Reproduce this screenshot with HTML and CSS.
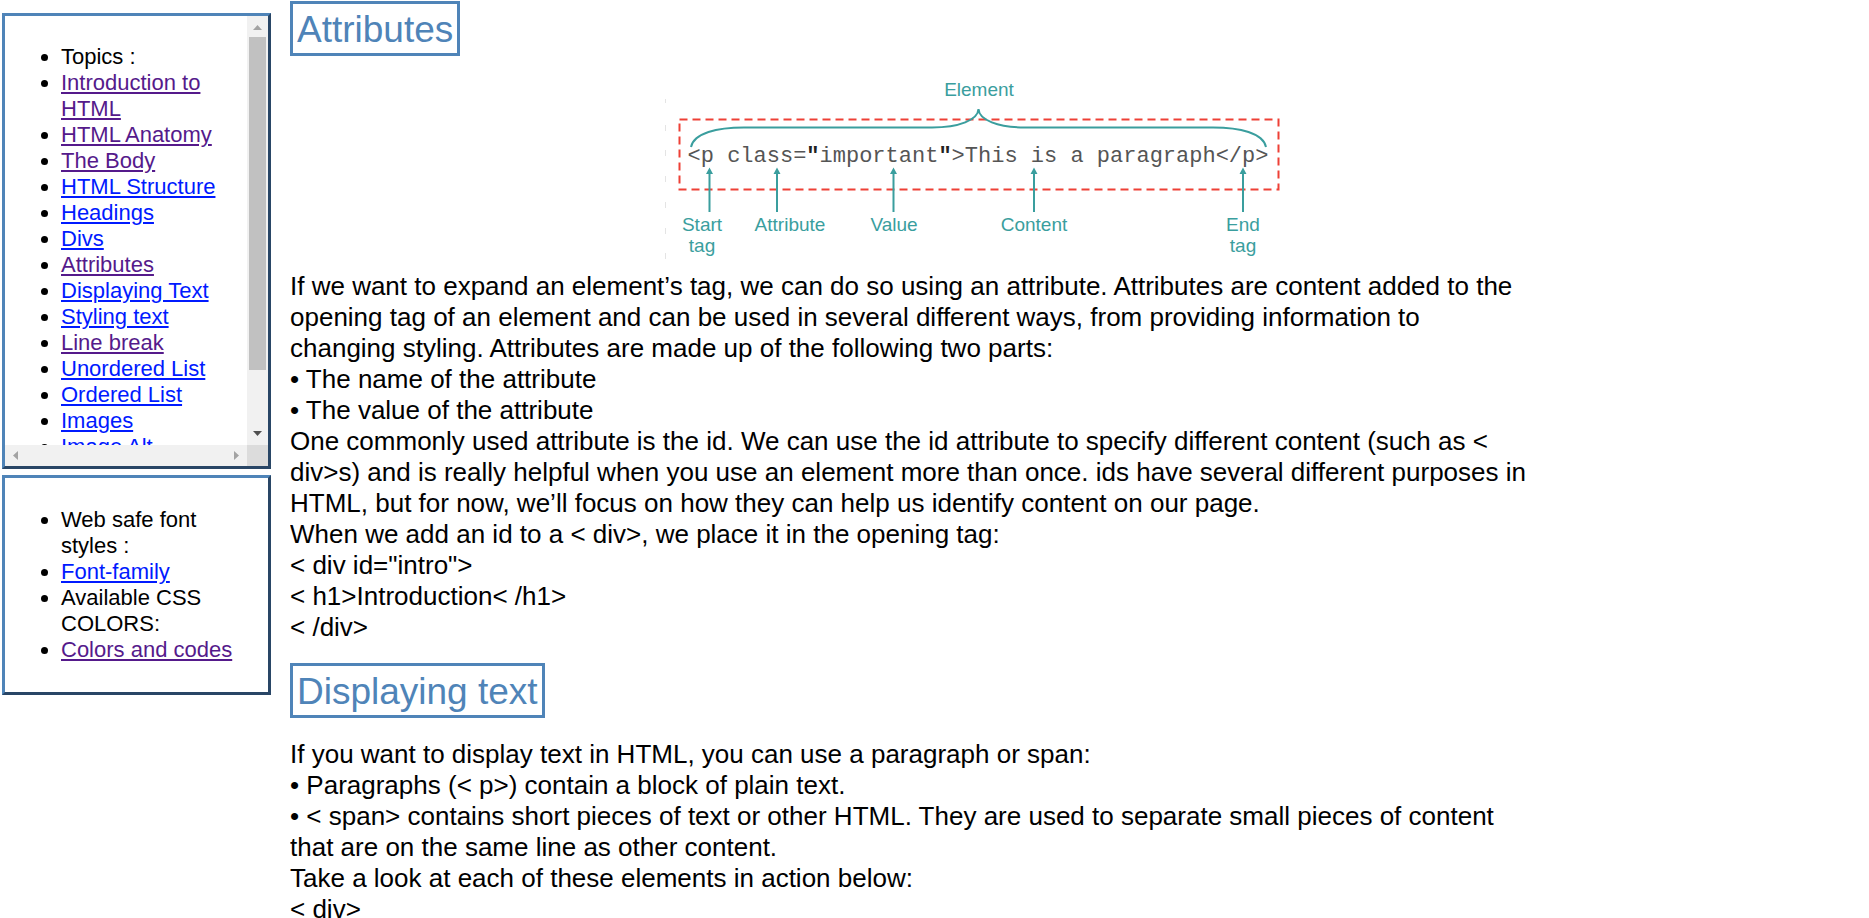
FILE: index.html
```html
<!DOCTYPE html>
<html lang="en">
<head>
<meta charset="utf-8">
<title>Attributes</title>
<link rel="stylesheet" href="styles.css">
</head>
<body class="page">
<aside class="sidebar">
  <nav class="panel panel-scroll" aria-label="Topics">
    <div class="viewport">
      <ul class="list">
        <li>Topics :</li>
        <li><a class="seen" href="#intro">Introduction to HTML</a></li>
        <li><a class="seen" href="#anatomy">HTML Anatomy</a></li>
        <li><a class="seen" href="#body">The Body</a></li>
        <li><a href="#structure">HTML Structure</a></li>
        <li><a href="#headings">Headings</a></li>
        <li><a href="#divs">Divs</a></li>
        <li><a class="seen" href="#attributes">Attributes</a></li>
        <li><a href="#displaying">Displaying Text</a></li>
        <li><a href="#styling">Styling text</a></li>
        <li><a class="seen" href="#break">Line break</a></li>
        <li><a href="#unordered">Unordered List</a></li>
        <li><a href="#ordered">Ordered List</a></li>
        <li><a href="#images">Images</a></li>
        <li><a href="#alt">Image Alt</a></li>
      </ul>
    </div>
    <div class="bar bar-v">
      <svg class="arrow" viewBox="0 0 21 21"><path class="dim" d="M6 14L10.500 9L15 14Z"/></svg>
      <div class="thumb"></div>
      <svg class="arrow" viewBox="0 0 21 21"><path class="dark" d="M6 7L15 7L10.500 12Z"/></svg>
    </div>
    <div class="bar bar-h">
      <svg class="arrow" viewBox="0 0 21 21"><path class="dim" d="M13 6L8 10.500L13 15Z"/></svg>
      <svg class="arrow" viewBox="0 0 21 21"><path class="dim" d="M8 6L13 10.500L8 15Z"/></svg>
    </div>
    <div class="corner"></div>
  </nav>
  <nav class="panel" aria-label="Resources">
    <ul class="list">
      <li>Web safe font styles :</li>
      <li><a href="#fonts">Font-family</a></li>
      <li>Available CSS COLORS:</li>
      <li><a class="seen" href="#colors">Colors and codes</a></li>
    </ul>
  </nav>
</aside>
<main class="content">
  <h1 class="title" id="attributes">Attributes</h1>
  <svg class="diagram" viewBox="0 0 630 190" role="img" aria-label="Parts of an element">
    <path class="ticks" d="M.5 29v4M.5 55v6M.5 80v6M.5 106v6M.5 132v6M.5 158v6M.5 183v6"/>
    <rect class="dashes" x="14.500" y="49.500" width="599" height="70"/>
    <path class="line" d="M26 77C29 63 52 57.500 79 57.500H267C294 57.500 313 50 313.500 39C314 50 333 57.500 360 57.500H548C575 57.500 598 63 601 77"/>
    <path class="line" d="M44.500 142V102M112 142V102M228.500 142V102M369 142V102M578 142V102"/>
    <path class="head" d="M44.500 97.500l3.500 6.500h-7zM112 97.500l3.500 6.500h-7zM228.500 97.500l3.500 6.500h-7zM369 97.500l3.500 6.500h-7zM578 97.500l3.500 6.500h-7z"/>
    <text class="label" x="314" y="26">Element</text>
    <text class="code" x="313" y="92">&lt;p class=<tspan class="quote">"</tspan>important<tspan class="quote">"</tspan>&gt;This is a paragraph&lt;/p&gt;</text>
    <text class="label" x="37" y="161">Start</text>
    <text class="label" x="37" y="182">tag</text>
    <text class="label" x="125" y="161">Attribute</text>
    <text class="label" x="229" y="161">Value</text>
    <text class="label" x="369" y="161">Content</text>
    <text class="label" x="578" y="161">End</text>
    <text class="label" x="578" y="182">tag</text>
  </svg>
  <p class="text">If we want to expand an element’s tag, we can do so using an attribute. Attributes are content added to the opening tag of an element and can be used in several different ways, from providing information to changing styling. Attributes are made up of the following two parts:<br>
  • The name of the attribute<br>
  • The value of the attribute<br>
  One commonly used attribute is the id. We can use the id attribute to specify different content (such as &lt; div&gt;s) and is really helpful when you use an element more than once. ids have several different purposes in HTML, but for now, we’ll focus on how they can help us identify content on our page.<br>
  When we add an id to a &lt; div&gt;, we place it in the opening tag:<br>
  &lt; div id="intro"&gt;<br>
  &lt; h1&gt;Introduction&lt; /h1&gt;<br>
  &lt; /div&gt;</p>
  <h2 class="title" id="displaying">Displaying text</h2>
  <p class="text">If you want to display text in HTML, you can use a paragraph or span:<br>
  • Paragraphs (&lt; p&gt;) contain a block of plain text.<br>
  • &lt; span&gt; contains short pieces of text or other HTML. They are used to separate small pieces of content that are on the same line as other content.<br>
  Take a look at each of these elements in action below:<br>
  &lt; div&gt;</p>
</main>
</body>
</html>
```
FILE: styles.css
```css
* { box-sizing: border-box; }

.page {
  margin: 0;
  height: 100vh;
  overflow: hidden;
  display: flex;
  align-items: flex-start;
  gap: 19px;
  padding-left: 2px;
  background: #fff;
  color: #000;
  font-family: "Liberation Sans", Arial, sans-serif;
}

.sidebar {
  flex: 0 0 269px;
  display: flex;
  flex-direction: column;
  gap: 6px;
  padding-top: 13px;
  font-size: 22px;
  line-height: 26px;
}

.panel {
  border: 3px solid;
  border-color: #4f84b8 #294666 #294666 #4f84b8;
}

.panel-scroll {
  display: grid;
  grid-template-columns: 1fr 21px;
  grid-template-rows: 429px 21px;
}

.viewport { overflow: hidden; }

.list {
  margin: 0;
  padding: 29px 22px 29px 56px;
}

.panel-scroll .list { padding: 28px 5px 0 56px; }

.list a { color: #001aff; }
.list a.seen { color: #551a8b; }

.bar {
  display: flex;
  background: #f1f1f1;
}

.bar-v { flex-direction: column; }
.bar-h { justify-content: space-between; }
.corner { background: #dcdcdc; }

.arrow {
  flex: none;
  width: 21px;
  height: 21px;
}

.dim { fill: #a3a3a3; }
.dark { fill: #505050; }

.thumb {
  height: 333px;
  margin: 0 2px auto;
  background: #c1c1c1;
}

.content {
  flex: 1;
  height: 100vh;
  overflow: hidden;
  padding: 1px 200px 0 0;
}

.title {
  width: fit-content;
  margin: 0;
  padding: 4px 4px 2px;
  border: 3px solid #4f84b8;
  color: #4f84b8;
  font-size: 37px;
  line-height: 43px;
  font-weight: 400;
}

.text {
  max-width: 1240px;
  margin: 0;
  font-size: 26px;
  line-height: 31px;
}

.text + .title { margin: 20px 0 21px; }

.diagram {
  display: block;
  width: 630px;
  max-width: 100%;
  margin: 14px auto 11px;
}

.ticks { stroke: #e4e4e4; fill: none; }

.dashes {
  fill: none;
  stroke: #ee4036;
  stroke-width: 2;
  stroke-dasharray: 8 5;
}

.line {
  fill: none;
  stroke: #3a9e9e;
  stroke-width: 2;
}

.head { fill: #3a9e9e; }

.label {
  fill: #3a9e9e;
  font-size: 19px;
  text-anchor: middle;
}

.code {
  fill: #555;
  font-family: "Liberation Mono", "Courier New", monospace;
  font-size: 22px;
  text-anchor: middle;
}

.quote {
  fill: #222;
  font-weight: 700;
}
```
